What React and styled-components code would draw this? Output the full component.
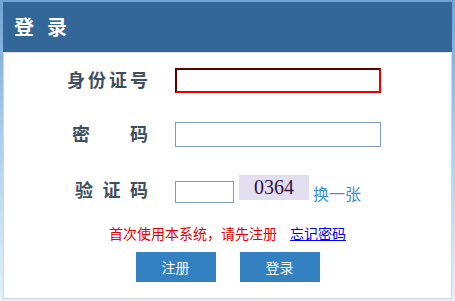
import React from "react";
import styled, { createGlobalStyle } from "styled-components";

const Global = createGlobalStyle`
  html, body { margin: 0; padding: 0; background: #fff; }
  body { font-family: "Noto Sans CJK SC", "Noto Sans", sans-serif; }
  * { box-sizing: border-box; }
`;

const Frame = styled.div`
  width: 455px;
  height: 301px;
  padding: 2px 3px;
  background: linear-gradient(to bottom, #72a3d4 0%, #a9cdec 45%, #e3f1fa 100%);
  display: flex;
  flex-direction: column;
`;

const Header = styled.div`
  height: 50px;
  background: #336699;
  display: flex;
  align-items: center;
  gap: 13px;
  padding-left: 11px;
  color: #fff;
  font-size: 20px;
  font-weight: bold;
  line-height: 1;
`;

const Body = styled.div`
  flex: 1;
  background: #fff;
  border: 1px solid #d4d4d4;
  border-top-color: #e2e2e2;
  display: flex;
  flex-direction: column;
`;

const Row = styled.div`
  display: grid;
  grid-template-columns: 144px 1fr;
  column-gap: 27px;
  align-items: center;
  margin-top: ${(p) => p.$mt}px;
  height: ${(p) => p.$h}px;
`;

const Label = styled.div`
  justify-self: end;
  width: ${(p) => p.$w}px;
  display: flex;
  justify-content: space-between;
  font-size: 18px;
  line-height: 20px;
  font-weight: bold;
  color: #3e4f60;
  margin-bottom: ${(p) => p.$up || 0}px;
`;

const Input = styled.input`
  width: ${(p) => p.$w}px;
  height: ${(p) => p.$h}px;
  margin: 0;
  padding: 0 3px;
  background: #fff;
  outline: none;
  border: ${(p) => (p.$alert ? "2px solid" : "1px solid #7f9db9")};
  border-color: ${(p) => (p.$alert ? "#5e0000 #e60000 #e60000 #5e0000" : "#7f9db9")};
  font-size: 14px;
`;

const CodeField = styled.div`
  display: flex;
  align-items: flex-end;
  height: 100%;
  gap: 5px;
`;

const Captcha = styled.div`
  width: 70px;
  height: 25px;
  margin-bottom: 3px;
  background: #e1dff0;
  display: flex;
  align-items: center;
  justify-content: center;
  font-family: "Liberation Serif", serif;
  font-size: 20px;
  color: #33103f;
`;

const Refresh = styled.a`
  font-size: 16px;
  line-height: 20px;
  color: #3b8fd2;
  text-decoration: none;
  margin-left: -1px;
  cursor: pointer;
`;

const Notice = styled.div`
  margin-top: 20px;
  height: 20px;
  display: flex;
  justify-content: center;
  align-items: center;
  gap: 13px;
  font-size: 14px;
  line-height: 20px;
`;

const Warn = styled.span`
  color: #e60000;
`;

const Forgot = styled.a`
  color: #0000ff;
  text-decoration: underline;
  cursor: pointer;
`;

const Buttons = styled.div`
  margin-top: 9px;
  display: flex;
  justify-content: center;
  gap: 24px;
`;

const Button = styled.button`
  width: 80px;
  height: 30px;
  border: none;
  margin: 0;
  padding: 0;
  background: #3381c1;
  color: #fff;
  font-family: "Noto Sans CJK SC", sans-serif;
  font-size: 14px;
  cursor: pointer;
`;

const Chars = ({ text }) => text.split("").map((c, i) => <span key={i}>{c}</span>);

export default function App() {
  return (
    <>
      <Global />
      <Frame>
        <Header>
          <span>登</span>
          <span>录</span>
        </Header>
        <Body>
          <Row $mt={15} $h={25}>
            <Label $w={81} $up={4}>
              <Chars text="身份证号" />
            </Label>
            <Input $w={206} $h={25} $alert />
          </Row>
          <Row $mt={29} $h={25}>
            <Label $w={76} $up={4}>
              <Chars text="密码" />
            </Label>
            <Input $w={206} $h={25} type="password" />
          </Row>
          <Row $mt={28} $h={28}>
            <Label $w={73}>
              <Chars text="验证码" />
            </Label>
            <CodeField>
              <Input $w={59} $h={22} />
              <Captcha>0364</Captcha>
              <Refresh>换一张</Refresh>
            </CodeField>
          </Row>
          <Notice>
            <Warn>首次使用本系统，请先注册</Warn>
            <Forgot>忘记密码</Forgot>
          </Notice>
          <Buttons>
            <Button>注册</Button>
            <Button>登录</Button>
          </Buttons>
        </Body>
      </Frame>
    </>
  );
}
